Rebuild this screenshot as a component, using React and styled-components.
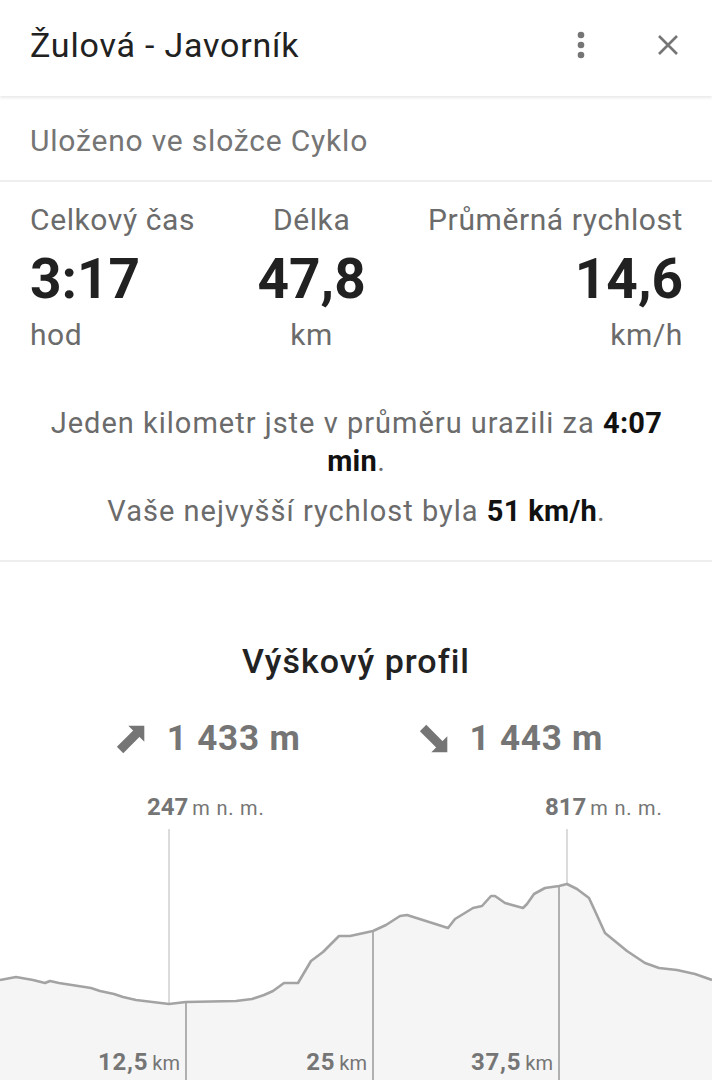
import React from "react";
import styled, { createGlobalStyle } from "styled-components";

const Global = createGlobalStyle`
  html, body { margin: 0; padding: 0; background: #fff; }
  body { font-family: Roboto, "Noto Sans", sans-serif; -webkit-font-smoothing: antialiased; }
  * { box-sizing: border-box; }
`;

const Page = styled.div`
  width: 712px;
  height: 1080px;
  overflow: hidden;
  background: #fff;
  display: flex;
  flex-direction: column;
`;

const Header = styled.header`
  height: 96px;
  flex: none;
  display: flex;
  align-items: center;
  padding: 0 22px 0 30px;
  box-shadow: 0 2px 3px rgba(0, 0, 0, 0.09);
  position: relative;
  z-index: 1;
`;

const Title = styled.h1`
  margin: 0;
  flex: 1;
  font-size: 34px;
  letter-spacing: 0.8px;
  font-weight: 400;
  color: #212121;
  line-height: 40px;
  padding-bottom: 6px;
`;

const IconButton = styled.button`
  border: 0;
  background: none;
  padding: 0;
  width: 44px;
  height: 44px;
  display: flex;
  align-items: center;
  justify-content: center;
  margin-left: ${(p) => p.$gap || 0}px;
  margin-bottom: 6px;
`;

const Sub = styled.div`
  height: 86px;
  flex: none;
  display: flex;
  align-items: center;
  padding: 4px 30px 0;
  font-size: 30px;
  letter-spacing: 0.8px;
  color: #757575;
  border-bottom: 2px solid #eeeeee;
`;

const Stats = styled.section`
  padding: 20px 29px 30px 30px;
  border-bottom: 2px solid #eeeeee;
  flex: none;
`;

const StatRow = styled.div`
  display: flex;
  justify-content: space-between;
`;

const Stat = styled.div`
  display: flex;
  flex-direction: column;
  align-items: ${(p) => p.$align};
  text-align: ${(p) => p.$text};
`;

const StatLabel = styled.div`
  font-size: 30px;
  letter-spacing: 0.6px;
  line-height: 36px;
  color: #6b6b6b;
  white-space: nowrap;
`;

const StatValue = styled.div`
  font-size: 55px;
  font-weight: 700;
  line-height: 60px;
  color: #212121;
  margin-top: 11px;
`;

const StatUnit = styled.div`
  font-size: 30px;
  letter-spacing: 0.6px;
  line-height: 36px;
  color: #6b6b6b;
  margin-top: 8px;
`;

const Sentence = styled.p`
  margin: ${(p) => p.$mt}px 0 0;
  padding: 0 12px;
  text-align: center;
  font-size: 29px;
  letter-spacing: 1px;
  line-height: 38px;
  color: #6b6b6b;
`;

const Strong = styled.b`
  color: #111;
  font-weight: 700;
  letter-spacing: 0.3px;
`;

const Profile = styled.section`
  flex: 1;
  display: flex;
  flex-direction: column;
  align-items: center;
  padding-top: 79px;
`;

const ProfileTitle = styled.h2`
  margin: 0;
  font-size: 34px;
  letter-spacing: 1px;
  line-height: 40px;
  font-weight: 500;
  color: #222;
`;

const Climb = styled.div`
  display: flex;
  gap: 117px;
  margin-top: 38px;
  padding-left: 6px;
`;

const ClimbItem = styled.div`
  display: flex;
  align-items: center;
  gap: 20px;
  font-size: 35px;
  letter-spacing: 0.8px;
  line-height: 40px;
  font-weight: 700;
  color: #757575;
`;

const Chart = styled.svg`
  display: block;
  margin-top: 22px;
  flex: none;
`;

const Arrow = ({ down }) => (
  <svg width="32" height="32" viewBox="0 0 24 24" style={down ? { transform: "scaleY(-1)" } : undefined}>
    <polygon points="10,2 22,2 22,14" fill="#757575" />
    <polygon points="14.6,4.6 19.4,9.4 6.2,22.6 1.4,17.8" fill="#757575" />
  </svg>
);

const pts = [
  [0, 979], [16, 976], [33, 979], [45, 982], [50, 980], [59, 982], [91, 987], [100, 990],
  [114, 993], [123, 996], [136, 999], [169, 1003], [186, 1001], [236, 1000], [252, 998],
  [264, 994], [273, 990], [284, 982], [298, 982], [311, 960], [323, 951], [339, 935],
  [350, 935], [373, 930], [386, 924], [400, 915], [407, 914], [448, 927], [455, 918],
  [473, 907], [482, 905], [491, 895], [495, 895], [505, 902], [523, 907], [527, 903],
  [534, 893], [545, 887], [559, 885], [567, 883], [577, 888], [589, 897], [595, 910],
  [605, 932], [627, 950], [645, 962], [659, 967], [677, 969], [695, 973], [712, 979],
];
const TOP = 780;
const line = pts.map(([x, y], i) => `${i ? "L" : "M"}${x},${y - TOP}`).join(" ");
const area = `${line} L712,300 L0,300 Z`;

const labelFont = { fontFamily: "Roboto, sans-serif" };

const TopLabel = ({ x, num }) => (
  <text x={x - 22} y={34} style={labelFont} fill="#757575">
    <tspan fontSize="24" fontWeight="700">{num}</tspan>
    <tspan fontSize="20" dx="4" letterSpacing="0.8">m n. m.</tspan>
  </text>
);

const BottomLabel = ({ x, num }) => (
  <text x={x - 6} y={289} style={labelFont} fill="#757575" textAnchor="end">
    <tspan fontSize="24" fontWeight="700" letterSpacing="0.8">{num}</tspan>
    <tspan fontSize="20" dx="4">km</tspan>
  </text>
);

const yAt = (x) => {
  for (let i = 1; i < pts.length; i++) {
    const [x1, y1] = pts[i];
    const [x0, y0] = pts[i - 1];
    if (x <= x1) return y0 + ((y1 - y0) * (x - x0)) / (x1 - x0 || 1) - TOP;
  }
  return 0;
};

export default function App() {
  return (
    <Page>
      <Global />
      <Header>
        <Title>Žulová - Javorník</Title>
        <IconButton aria-label="menu">
          <svg width="10" height="28" viewBox="0 0 10 28">
            <circle cx="5" cy="4" r="3.3" fill="#757575" />
            <circle cx="5" cy="14" r="3.3" fill="#757575" />
            <circle cx="5" cy="24" r="3.3" fill="#757575" />
          </svg>
        </IconButton>
        <IconButton aria-label="close" $gap={43}>
          <svg width="22" height="22" viewBox="0 0 22 22">
            <path d="M2 2 L20 20 M20 2 L2 20" stroke="#757575" strokeWidth="2.6" />
          </svg>
        </IconButton>
      </Header>
      <Sub>Uloženo ve složce Cyklo</Sub>
      <Stats>
        <StatRow>
          <Stat $align="flex-start" $text="left">
            <StatLabel>Celkový čas</StatLabel>
            <StatValue>3:17</StatValue>
            <StatUnit>hod</StatUnit>
          </Stat>
          <Stat $align="center" $text="center">
            <StatLabel>Délka</StatLabel>
            <StatValue>47,8</StatValue>
            <StatUnit>km</StatUnit>
          </Stat>
          <Stat $align="flex-end" $text="right">
            <StatLabel>Průměrná rychlost</StatLabel>
            <StatValue>14,6</StatValue>
            <StatUnit>km/h</StatUnit>
          </Stat>
        </StatRow>
        <Sentence $mt={51}>
          Jeden kilometr jste v průměru urazili za <Strong>4:07</Strong> <Strong>min</Strong>.
        </Sentence>
        <Sentence $mt={12}>
          Vaše nejvyšší rychlost byla <Strong>51 km/h</Strong>.
        </Sentence>
      </Stats>
      <Profile>
        <ProfileTitle>Výškový profil</ProfileTitle>
        <Climb>
          <ClimbItem>
            <Arrow />
            1 433 m
          </ClimbItem>
          <ClimbItem>
            <Arrow down />
            1 443 m
          </ClimbItem>
        </Climb>
        <Chart width="712" height="300" viewBox="0 0 712 300">
          <path d={area} fill="#f5f5f5" />
          <line x1="169" y1="48" x2="169" y2={yAt(169)} stroke="#cfcfcf" strokeWidth="1.5" />
          <line x1="567" y1="48" x2="567" y2={yAt(567)} stroke="#cfcfcf" strokeWidth="1.5" />
          <line x1="186" y1={yAt(186)} x2="186" y2="300" stroke="#b0b0b0" strokeWidth="2" />
          <line x1="373" y1={yAt(373)} x2="373" y2="300" stroke="#b0b0b0" strokeWidth="2" />
          <line x1="559" y1={yAt(559)} x2="559" y2="300" stroke="#b0b0b0" strokeWidth="2" />
          <path d={line} fill="none" stroke="#a3a3a3" strokeWidth="2.6" strokeLinejoin="round" />
          <TopLabel x={169} num="247" />
          <TopLabel x={567} num="817" />
          <BottomLabel x={186} num="12,5" />
          <BottomLabel x={373} num="25" />
          <BottomLabel x={559} num="37,5" />
        </Chart>
      </Profile>
    </Page>
  );
}
